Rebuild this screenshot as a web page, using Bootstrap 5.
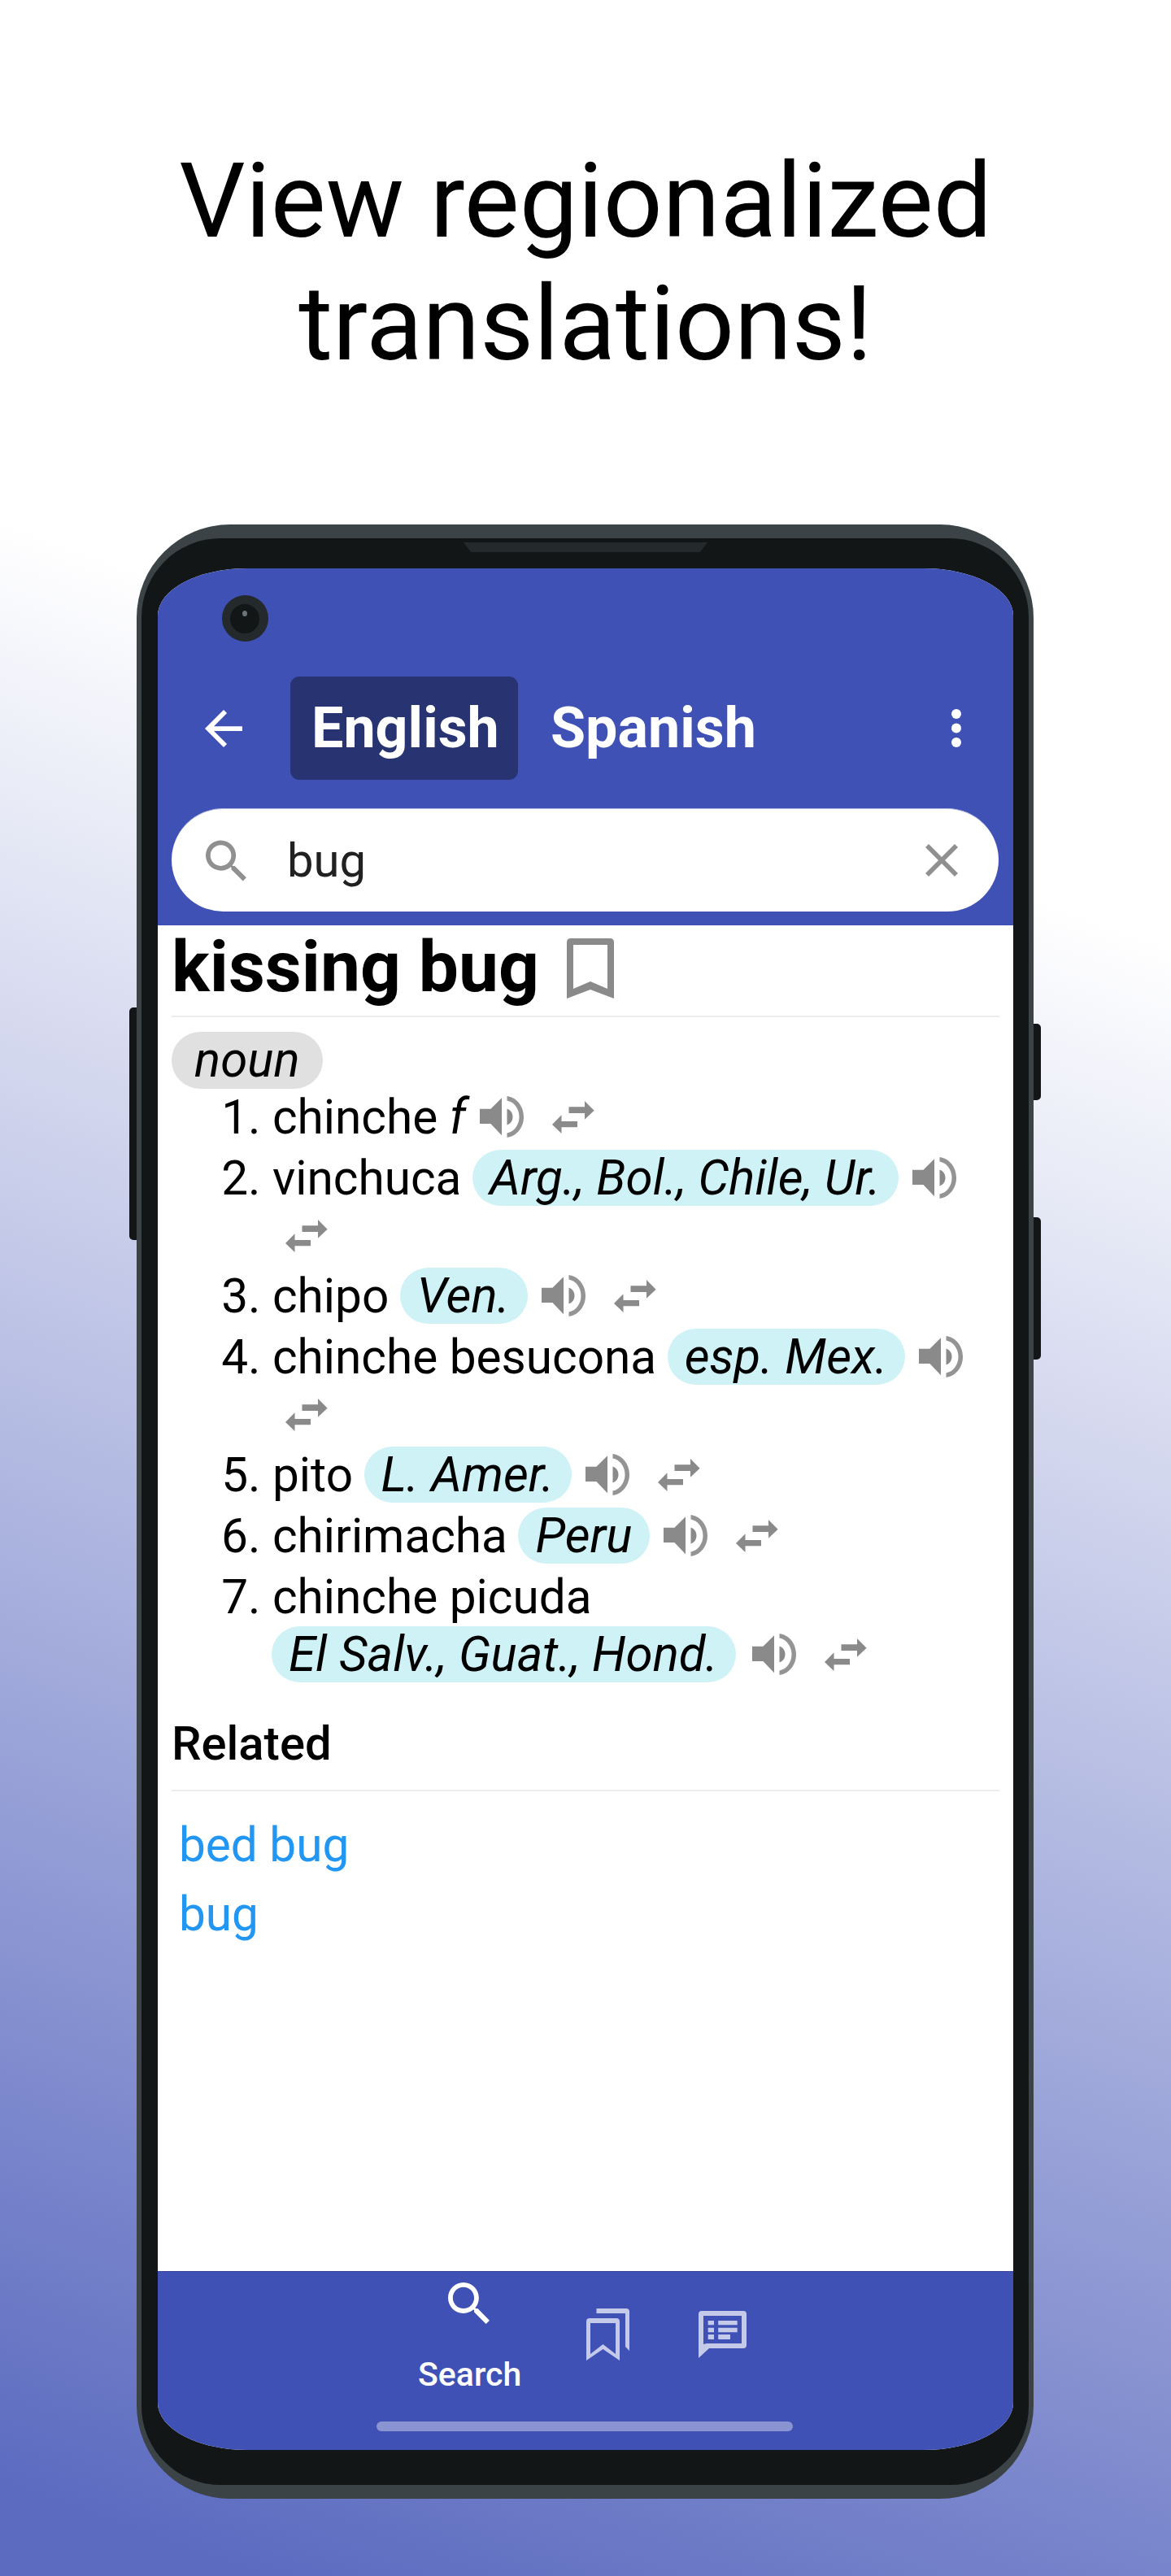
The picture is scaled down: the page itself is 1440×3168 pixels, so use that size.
<!DOCTYPE html>
<html lang="en">
<head>
  <meta charset="UTF-8" />
  <meta name="viewport" content="width=device-width, initial-scale=1" />
  <title>View regionalized translations</title>
  <link href="https://cdn.jsdelivr.net/npm/bootstrap@5.3.0/dist/css/bootstrap.min.css" rel="stylesheet" />
  <style>
    body { margin: 0; font-family: Roboto, "Liberation Sans", sans-serif; color: #000; }
    .promo-page { width: 1440px; height: 3168px; overflow: hidden; background: linear-gradient(200deg, #fff 31.5%, #5c6bc0 97%); }
    .promo-title { height: 645px; padding-top: 172px; margin: 0; font-size: 128px; font-weight: 400; line-height: 151px; text-align: center; }

    /* phone body */
    .phone-shell { position: relative; width: 1103px; height: 2428px; margin-left: 168px; padding: 17px 6px 17px 6px; background: #3b4346; border-radius: 115px; }
    .phone-bezel { position: relative; height: 100%; padding: 37px 19px 43px 20px; background: #121617; border-radius: 97px; }
    .phone-screen { height: 100%; overflow: hidden; background: #fff; border-radius: 110px / 58px; }
    .phone-key { position: absolute; width: 9px; background: #121617; }
    .key-left { left: -9px; top: 594px; height: 286px; border-radius: 5px 0 0 5px; }
    .key-power { right: -9px; top: 614px; height: 94px; border-radius: 0 5px 5px 0; }
    .key-volume { right: -9px; top: 852px; height: 175px; border-radius: 0 5px 5px 0; }
    .phone-notch { position: absolute; left: 396px; top: 5px; width: 300px; height: 12px; background: #24292b; clip-path: polygon(0 0, 100% 0, 97% 100%, 3% 100%); }

    /* app header */
    .app-header { height: 439px; background: #3f51b5; }
    .status-row { height: 133px; padding: 33px 0 0 79px; }
    .front-camera { position: relative; width: 57px; height: 57px; background: #24292b; border-radius: 50%; }
    .front-camera::before { content: ""; position: absolute; left: 10px; top: 11px; width: 36px; height: 36px; background: #121617; border-radius: 50%; }
    .front-camera::after { content: ""; position: absolute; left: 25px; top: 19px; width: 6px; height: 7px; background: #6b7478; border-radius: 50%; }
    .tool-row { height: 127px; padding-left: 58px; padding-right: 64px; }
    .lang-btn { height: 127px; font-size: 70px; font-weight: 700; line-height: 127px; color: #fff; border-radius: 11px; }
    .lang-on { width: 280px; margin-left: 59px; padding-left: 26px; background: #283371; }
    .lang-off { margin-left: 40px; }
    .search-field { height: 127px; margin: 35px 18px 0 17px; padding: 0 50px 0 42px; background: #fff; border-top: 1px solid #b4bce0; border-radius: 64px; }
    .search-text { margin-left: 50px; font-size: 58px; color: #212121; }

    /* entry */
    .entry-body { height: 1655px; padding: 0 17px; }
    .entry-head { height: 113px; border-bottom: 2px solid #ececec; }
    .entry-word { margin: 0; font-size: 87.5px; font-weight: 700; line-height: 102px; }
    .save-icon { margin: 16px 0 0 34px; }
    .pos-row { height: 85px; padding-top: 18px; }
    .pos-tag { display: inline-block; height: 70px; padding: 0 28px; font-size: 60px; font-style: italic; line-height: 70px; background: #e0e0e0; border-radius: 35px; }
    .sense-list { margin: 0; padding: 0 0 0 124px; font-size: 58.5px; line-height: 75px; }
    .sense-line { white-space: nowrap; }
    .sense-line i { font-size: 60px; }
    .wrap-line { height: 70px; line-height: 66px; white-space: nowrap; }
    .region-tag { display: inline-block; height: 69px; margin-left: -1px; padding: 0 22px 0 21px; font-size: 60px; font-style: italic; line-height: 69px; background: #cff2f7; border-radius: 35px; }
    .wrap-line .region-tag { margin: -3px 3px 0 -1px; }
    .say-icon { margin-left: 17px; vertical-align: -5px; }
    .swap-icon { margin-left: 35px; vertical-align: 0; }
    .wrap-line .swap-only { margin-left: 16px; }
    .related-head { height: 131px; padding-top: 33px; font-size: 58px; font-weight: 500; line-height: 78px; border-bottom: 2px solid #ececec; }
    .related-links { padding: 24px 0 0 9px; }
    .related-link { display: block; font-size: 58.5px; line-height: 85px; color: #2196f3; text-decoration: none; }

    /* bottom nav */
    .bottom-nav { position: relative; height: 220px; background: #3f51b5; border-top: 1px solid #35449a; }
    .nav-search { position: absolute; left: 320px; top: 13px; width: 125px; text-align: center; font-size: 41px; font-weight: 500; line-height: 47px; color: #fff; white-space: nowrap; }
    .nav-search svg { display: block; margin: 0 auto 39px; }
    .nav-saved { position: absolute; left: 527px; top: 45px; }
    .nav-feedback { position: absolute; left: 665px; top: 48px; }
    .home-bar { position: absolute; left: 269px; top: 184px; width: 512px; height: 12px; background: #8a94d2; border-radius: 6px; }
  </style>
</head>
<body>
  <svg width="0" height="0" class="d-none">
    <symbol id="ic-search" viewBox="3 3 17.5 17.5"><path d="M15.5 14h-.79l-.28-.27C15.41 12.59 16 11.11 16 9.5 16 5.91 13.09 3 9.5 3S3 5.91 3 9.5 5.91 16 9.5 16c1.61 0 3.09-.59 4.23-1.57l.27.28v.79l5 4.99L20.49 19l-4.99-5zm-6 0C7.01 14 5 11.99 5 9.5S7.01 5 9.5 5 14 7.01 14 9.5 11.99 14 9.5 14z"/></symbol>
    <symbol id="ic-say" viewBox="0 0 54 51"><path fill="#8a8a8a" d="M0 15.7H13.4L27 2.3V48.3L13.4 34H0Z"/><path fill="#8a8a8a" d="M33.5 15.5C38 17 40.5 21 40.5 25.5S38 34 33.5 35.5Z"/><path fill="#949494" d="M33.5 0C45 1.5 54 12 54 25.5S45 49.5 33.5 51V45.5C42 44 48.5 35.5 48.5 25.5S42 7 33.5 5.5Z"/></symbol>
    <symbol id="ic-swap" viewBox="0 0 52 40"><path fill="#8a8a8a" d="M20.5 7.3H40V0L51.6 11.7 40 22.7V15H20.5ZM0 29 11.5 17.3V25H31V32.3H11.5V40Z"/></symbol>
  </svg>

  <div class="promo-page">
    <h1 class="promo-title">View regionalized<br>translations!</h1>

    <div class="phone-shell">
      <div class="phone-key key-left"></div>
      <div class="phone-key key-power"></div>
      <div class="phone-key key-volume"></div>

      <div class="phone-bezel">
        <div class="phone-notch"></div>
        <div class="phone-screen d-flex flex-column">

          <!-- header -->
          <div class="app-header">
            <div class="status-row"><div class="front-camera"></div></div>
            <div class="tool-row d-flex align-items-center">
              <svg width="46" height="46" viewBox="4 4 16 16" fill="#fff"><path d="M20 11H7.83l5.59-5.59L12 4l-8 8 8 8 1.41-1.41L7.83 13H20v-2z"/></svg>
              <div class="lang-btn lang-on">English</div>
              <div class="lang-btn lang-off">Spanish</div>
              <svg class="ms-auto" width="12" height="47" viewBox="0 0 12 47" fill="#fff"><ellipse cx="6" cy="6" rx="6" ry="6"/><ellipse cx="6" cy="23.5" rx="6" ry="6"/><ellipse cx="6" cy="41" rx="6" ry="6"/></svg>
            </div>
            <div class="search-field d-flex align-items-center">
              <svg width="50" height="51" fill="#909090"><use href="#ic-search"/></svg>
              <span class="search-text">bug</span>
              <svg class="ms-auto" width="40" height="40" viewBox="5 5 14 14" fill="#909090"><path d="M19 6.41L17.59 5 12 10.59 6.41 5 5 6.41 10.59 12 5 17.59 6.41 19 12 13.41 17.59 19 19 17.59 13.41 12z"/></svg>
            </div>
          </div>

          <!-- entry -->
          <div class="entry-body">
            <div class="entry-head d-flex align-items-start">
              <h2 class="entry-word">kissing bug</h2>
              <svg class="save-icon" width="58" height="74" viewBox="0 0 58 74" fill="#8a8a8a" fill-rule="evenodd"><path d="M0 74V5Q0 0 5 0H53Q58 0 58 5V74L29 63ZM8 8V62L29 53 50 62V8Z"/></svg>
            </div>
            <div class="pos-row"><span class="pos-tag">noun</span></div>
            <ol class="sense-list">
              <li><div class="sense-line">chinche <i>f</i><svg class="say-icon" width="54" height="51"><use href="#ic-say"/></svg><svg class="swap-icon" width="52" height="40"><use href="#ic-swap"/></svg></div></li>
              <li>
                <div class="sense-line">vinchuca <span class="region-tag">Arg., Bol., Chile, Ur.</span><svg class="say-icon" width="54" height="51"><use href="#ic-say"/></svg></div>
                <div class="wrap-line"><svg class="swap-icon swap-only" width="52" height="40"><use href="#ic-swap"/></svg></div>
              </li>
              <li><div class="sense-line">chipo <span class="region-tag">Ven.</span><svg class="say-icon" width="54" height="51"><use href="#ic-say"/></svg><svg class="swap-icon" width="52" height="40"><use href="#ic-swap"/></svg></div></li>
              <li>
                <div class="sense-line">chinche besucona <span class="region-tag">esp. Mex.</span><svg class="say-icon" width="54" height="51"><use href="#ic-say"/></svg></div>
                <div class="wrap-line"><svg class="swap-icon swap-only" width="52" height="40"><use href="#ic-swap"/></svg></div>
              </li>
              <li><div class="sense-line">pito <span class="region-tag">L. Amer.</span><svg class="say-icon" width="54" height="51"><use href="#ic-say"/></svg><svg class="swap-icon" width="52" height="40"><use href="#ic-swap"/></svg></div></li>
              <li><div class="sense-line">chirimacha <span class="region-tag">Peru</span><svg class="say-icon" width="54" height="51"><use href="#ic-say"/></svg><svg class="swap-icon" width="52" height="40"><use href="#ic-swap"/></svg></div></li>
              <li>
                <div class="sense-line">chinche picuda</div>
                <div class="wrap-line"><span class="region-tag">El Salv., Guat., Hond.</span><svg class="say-icon" width="54" height="51"><use href="#ic-say"/></svg><svg class="swap-icon" width="52" height="40"><use href="#ic-swap"/></svg></div>
              </li>
            </ol>
            <div class="related-head">Related</div>
            <div class="related-links">
              <a class="related-link" href="#">bed bug</a>
              <a class="related-link" href="#">bug</a>
            </div>
          </div>

          <!-- bottom nav -->
          <div class="bottom-nav">
            <div class="nav-search">
              <svg width="53" height="51" fill="#fff"><use href="#ic-search"/></svg>
              Search
            </div>
            <svg class="nav-saved" width="53" height="64" viewBox="0 0 53 64" fill="#c5cae9" fill-rule="evenodd"><path d="M12.5 0H49Q53 0 53 4V52L48 47V6H12.5Z"/><path d="M0 64V16Q0 12 4 12H37Q41 12 41 16V64L20.5 50ZM5 18V56L20.5 44 36 56V18Z"/></svg>
            <svg class="nav-feedback" width="59" height="58" viewBox="0 0 59 58" fill="#c5cae9" fill-rule="evenodd"><path d="M4 0H55Q59 0 59 4V42Q59 46 55 46H13L0 58V4Q0 0 4 0ZM6 6V41L10 40H53V6Z"/><path d="M11.7 12H19V17.3H11.7ZM24.2 12H47.7V17.3H24.2ZM11.7 20.7H19V26.3H11.7ZM24.2 20.7H47.7V26.3H24.2ZM11.7 29H19V35H11.7ZM24.2 29H39V35H24.2Z"/></svg>
            <div class="home-bar"></div>
          </div>
        </div>
      </div>
    </div>
  </div>
  <script src="https://cdn.jsdelivr.net/npm/bootstrap@5.3.0/dist/js/bootstrap.bundle.min.js"></script>
</body>
</html>
